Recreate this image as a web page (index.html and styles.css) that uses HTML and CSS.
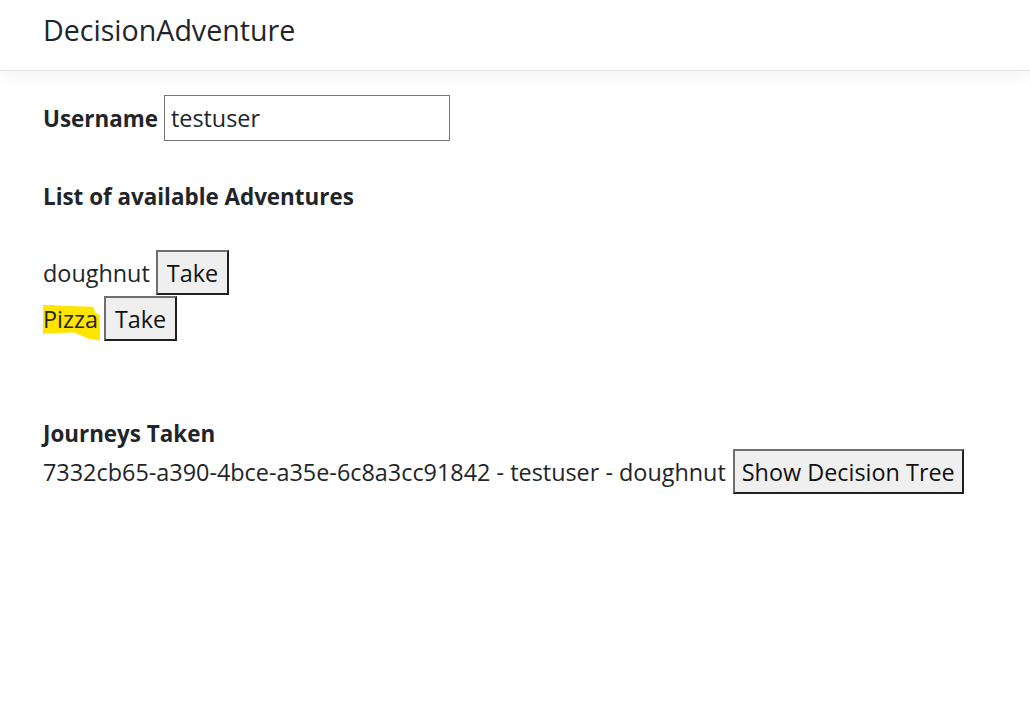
FILE: index.html
```html
<!DOCTYPE html>
<html lang="en">
<head>
<meta charset="utf-8">
<title>DecisionAdventure</title>
<link rel="stylesheet" href="styles.css">
</head>
<body>
<header class="navbar">
  <span class="brand">DecisionAdventure</span>
</header>
<main class="content">
  <div class="user-row">
    <label class="label" for="username">Username</label>
    <input id="username" class="text-input" type="text" value="testuser">
  </div>
  <h5 class="section-title">List of available Adventures</h5>
  <div class="adventures">
    <div class="item"><span>doughnut</span><button class="btn">Take</button></div>
    <div class="item"><span class="hl">Pizza</span><button class="btn">Take</button></div>
  </div>
  <h5 class="section-title journeys-title">Journeys Taken</h5>
  <div class="item journey"><span>7332cb65-a390-4bce-a35e-6c8a3cc91842 - testuser - doughnut</span><button class="btn">Show Decision Tree</button></div>
</main>
</body>
</html>
```

FILE: styles.css
```css
* { box-sizing: border-box; }
html, body { margin: 0; padding: 0; }
body {
  font-family: "Open Sans", "Noto Sans", sans-serif;
  font-size: 23.4px;
  color: #212529;
  background: #fff;
}
.navbar {
  height: 71px;
  padding-left: 43px;
  display: flex;
  align-items: center;
  border-bottom: 1px solid #e3e3e3;
  box-shadow: 0 5px 15px rgba(0,0,0,0.05);
  padding-bottom: 11px;
}
.brand {
  font-size: 28.6px;
  color: #212529;
}
.content {
  padding: 24px 43px 0;
}
.user-row {
  display: flex;
  align-items: center;
  gap: 6px;
  height: 46px;
}
.label { font-weight: 700; font-size: 22.4px; }
.text-input {
  width: 286px;
  height: 46px;
  border: 1px solid #767676;
  padding: 0 6px;
  font: inherit;
  color: #212529;
  outline: none;
}
.section-title {
  margin: 0;
  font-size: 22.4px;
  font-weight: 700;
  line-height: 30px;
  margin-top: 41px;
}
.adventures {
  margin-top: 38px;
  display: flex;
  flex-direction: column;
  gap: 1px;
}
.item {
  display: flex;
  align-items: center;
  gap: 6px;
  height: 45px;
}
.btn {
  height: 45px;
  font: inherit;
  color: #111;
  background: #efefef;
  border: 2px solid;
  border-color: #6f6f6f #1f1f1f #1f1f1f #6f6f6f;
  padding: 0 9px;
  cursor: pointer;
}
.hl {
  position: relative;
  z-index: 0;
}
.hl::before {
  content: "";
  position: absolute;
  z-index: -1;
  left: 0;
  top: 2px;
  right: -2px;
  bottom: -6px;
  background: #ffe500;
  clip-path: polygon(0 0, 45% 4%, 88% 6%, 92% 22%, 100% 30%, 100% 100%, 80% 95%, 55% 78%, 10% 80%, 0 82%);
}
.journeys-title {
  margin-top: 78px;
}
.journey {
  margin-top: 0;
  gap: 7px;
}
.journey .btn { padding: 0 7px; }
```
